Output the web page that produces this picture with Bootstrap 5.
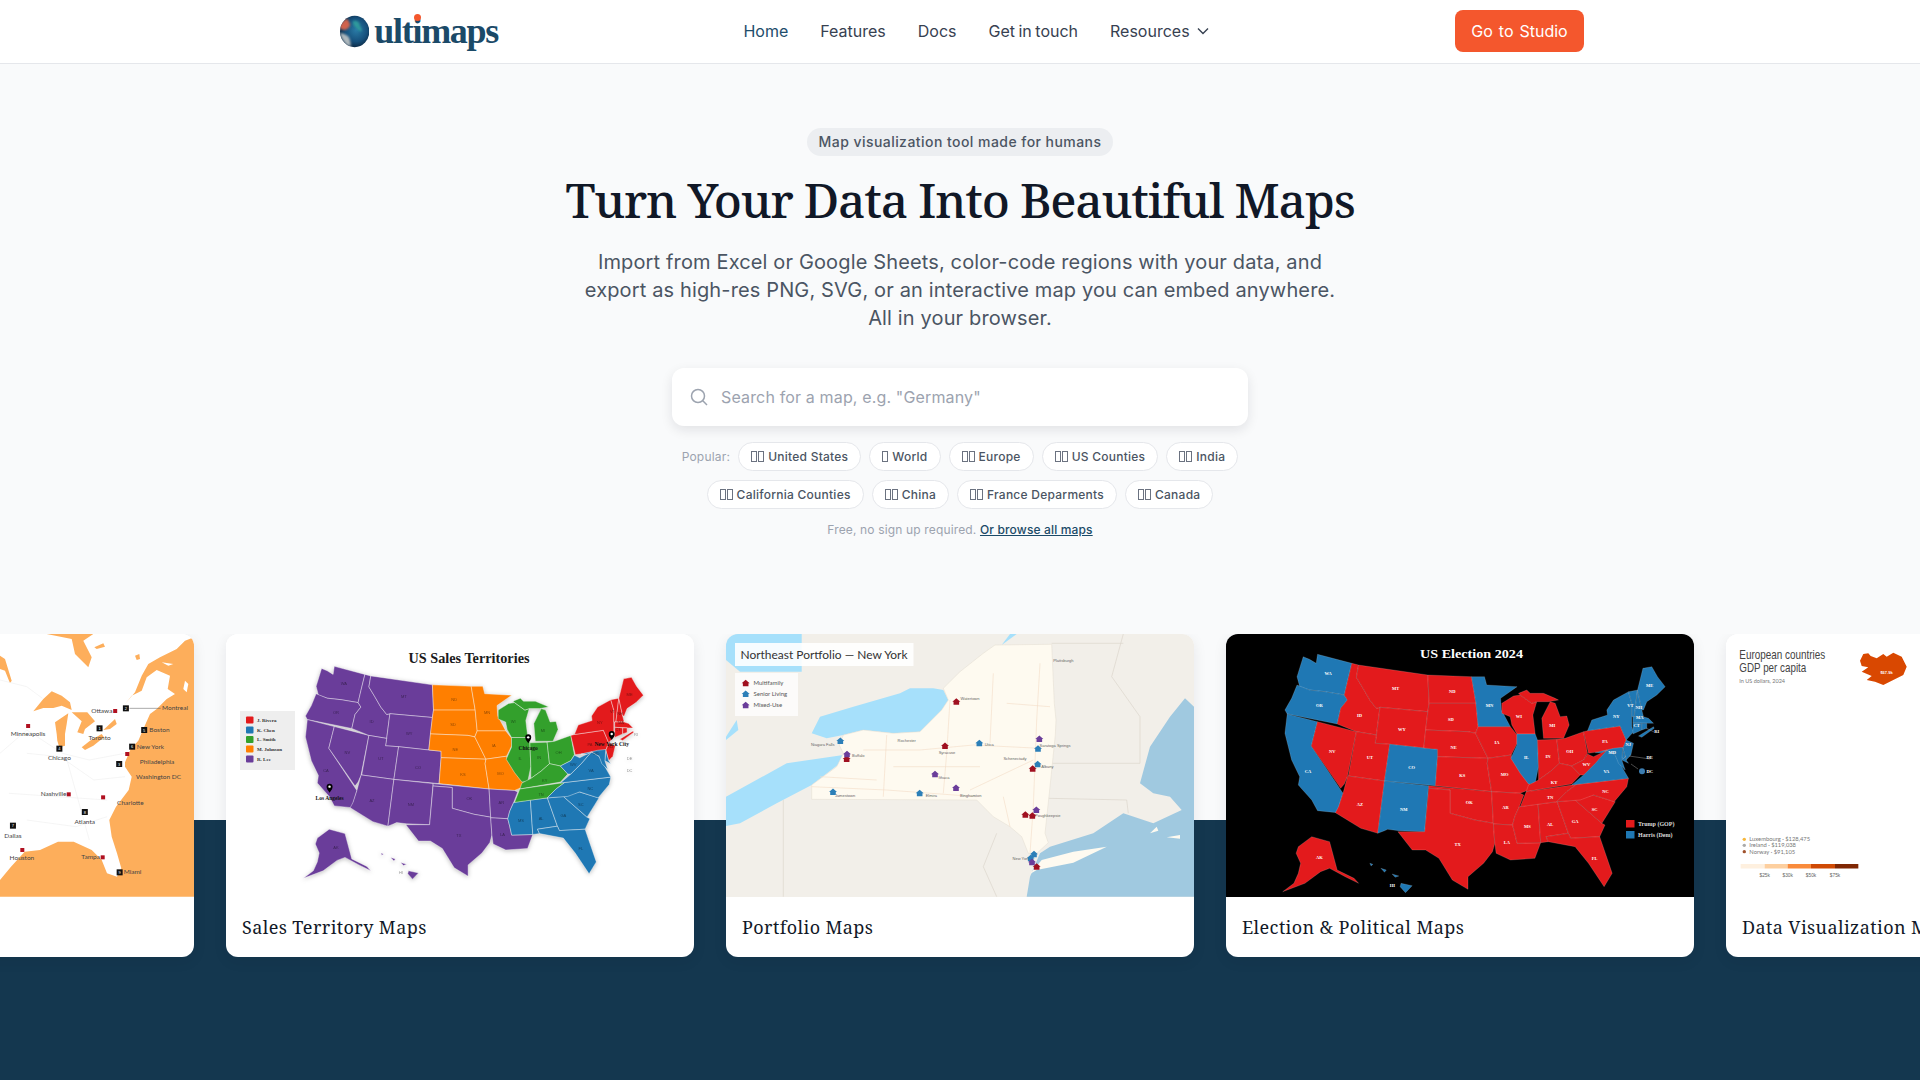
<!doctype html>
<html lang="en"><head><meta charset="utf-8"><title>ultimaps</title>
<link href="https://cdn.jsdelivr.net/npm/bootstrap@5.3.0/dist/css/bootstrap.min.css" rel="stylesheet">
<style>
body{background:#f9fafb;font-family:Inter,"Liberation Sans",sans-serif;color:#111827;overflow-x:hidden}
.site-nav{background:#fff;border-bottom:1px solid #e5e7eb;height:64px}
.nav-wrap{max-width:1280px;padding:0 16px;height:62px}
.brand-text{font-family:"Liberation Serif",serif;font-weight:700;font-size:36px;letter-spacing:-1.3px;color:#1b4a68;line-height:1}
.brand-wrap{width:162px;position:relative;gap:5px;padding-left:4px}
.brand-dot{position:absolute;left:78px;top:1px;width:7px;height:7px;border-radius:50%;background:#f4572d}
.top-link{color:#374151;font-size:16px;font-weight:400;text-decoration:none;word-spacing:-1px}
.top-link.active-link{color:#1e4d6b}
.link-row{gap:32px}
.caret-gap{gap:6px}
.studio-btn{background:#f4572d;color:#fff;border-radius:8px;height:42px;width:129px;font-size:16px;line-height:42px;padding:0;border:0;word-spacing:1.500px}
.hero-wrap{padding-top:64px;height:570px}
.tag-pill{background:#eceef1;color:#4b5563;font-size:14px;font-weight:500;border-radius:14px;height:28px;line-height:28px;padding:0 12px;letter-spacing:.45px;display:inline-block}
.hero-title{font-family:"Noto Serif","DejaVu Serif",serif;font-size:48px;font-weight:500;letter-spacing:-1.2px;line-height:58px;margin:15px 0 19px;color:#111827}
.hero-sub{font-size:20px;line-height:28px;color:#4b5563;width:768px;margin:0 auto 36px;letter-spacing:.14px}
.search-box{width:576px;height:58px;background:#fff;border-radius:12px;box-shadow:0 4px 12px rgba(17,24,39,.1);padding:0 18px;margin:0 auto 16px;gap:13px}
.search-input{border:0;outline:0;flex:1;background:none;font-size:16px;padding:0}
.search-input::placeholder{color:#9ca3af;letter-spacing:.15px}
.pill-area{width:576px;margin:0 auto;row-gap:9px;column-gap:8px}
.pop-label{font-size:12px;color:#9ca3af;line-height:29px;letter-spacing:.2px}
.map-pill{font-size:12px;font-weight:500;color:#4b5563;background:#fff;border:1px solid #e5e7eb;border-radius:15px;height:29px;padding:0 12px;gap:4px;letter-spacing:.25px;text-decoration:none}
.tofu-set{gap:1px}
.tofu-box{display:block;width:6px;height:11px;border:1px solid #6b7280}
.free-note{font-size:12px;color:#9ca3af;margin-top:12px;letter-spacing:.15px}
.free-note a{color:#1b4a68;font-weight:500}
.band{background:linear-gradient(#f9fafb 186px,#14374f 186px);padding-bottom:130px;overflow:hidden}
.card-row{gap:32px}
.map-card{flex:0 0 468px;height:323px;background:#fff;border-radius:12px;overflow:hidden;box-shadow:0 4px 14px rgba(17,24,39,.08)}
.map-pic{display:block;width:468px;height:263px}
.map-name{font-family:"Noto Serif","DejaVu Serif",serif;font-size:18px;font-weight:400;letter-spacing:.4px;padding:0 16px;height:60px;line-height:60px;color:#111827;white-space:nowrap}
</style></head><body>
<nav class="site-nav"><div class="nav-wrap mx-auto d-flex align-items-center justify-content-between">
<a class="brand-wrap d-flex align-items-center text-decoration-none">
<svg width="30" height="33" viewBox="2 0 30 33" aria-hidden="true"><defs><radialGradient id="gl" cx=".55" cy=".45" r=".62"><stop offset="0" stop-color="#2a7ba6"/><stop offset=".6" stop-color="#16507c"/><stop offset="1" stop-color="#0b2036"/></radialGradient><filter id="sf" x="-20%" y="-20%" width="140%" height="140%"><feGaussianBlur stdDeviation=".9"/></filter><clipPath id="gc"><ellipse cx="17" cy="16.500" rx="15" ry="16"/></clipPath></defs><ellipse cx="17" cy="16.500" rx="15" ry="16" fill="url(#gl)"/><g clip-path="url(#gc)" filter="url(#sf)"><path d="M2 10C5 5 8 3.500 10 4c1 3 3 4 2 7-1 2-2 3-5 4-2 0-3-1-5-1.500z" fill="#d0644e"/><path d="M2 18c2 0 5 1 8 3 2 2 3 6 3 11C8 31 3.500 25 2 18z" fill="#aeb8bd"/><path d="M15 6c3-1 6 0 7 3 0 3 3 4 2 7-2 1-3-1-5-3-2-1-4-4-4-7z" fill="#2f9a9c"/></g></svg>
<span class="brand-text">ultimaps</span><span class="brand-dot"></span></a>
<div class="link-row d-flex align-items-center"><a class="top-link active-link">Home</a><a class="top-link">Features</a><a class="top-link">Docs</a><a class="top-link">Get in touch</a><a class="top-link d-flex align-items-center caret-gap">Resources<svg width="14" height="14" viewBox="0 0 14 14" fill="none" stroke="#374151" stroke-width="1.400" aria-hidden="true"><path d="M2 4.500l5 5 5-5"/></svg></a></div>
<button class="studio-btn">Go to Studio</button></div></nav>
<section class="hero-wrap text-center"><span class="tag-pill">Map visualization tool made for humans</span>
<h1 class="hero-title">Turn Your Data Into Beautiful Maps</h1>
<p class="hero-sub">Import from Excel or Google Sheets, color-code regions with your data, and export as high-res PNG, SVG, or an interactive map you can embed anywhere. All in your browser.</p>
<div class="search-box d-flex align-items-center"><svg width="18" height="18" viewBox="0 0 18 18" fill="none" stroke="#9ca3af" stroke-width="1.500" aria-hidden="true"><circle cx="8" cy="8" r="6.500"/><path d="M12.800 12.800L17 17"/></svg><input class="search-input" placeholder='Search for a map, e.g. "Germany"'></div>
<div class="pill-area d-flex flex-wrap justify-content-center"><span class="pop-label">Popular:</span>
<a class="map-pill d-flex align-items-center"><span class="tofu-set d-flex"><i class="tofu-box"></i><i class="tofu-box"></i></span>United States</a>
<a class="map-pill d-flex align-items-center"><span class="tofu-set d-flex"><i class="tofu-box"></i></span>World</a>
<a class="map-pill d-flex align-items-center"><span class="tofu-set d-flex"><i class="tofu-box"></i><i class="tofu-box"></i></span>Europe</a>
<a class="map-pill d-flex align-items-center"><span class="tofu-set d-flex"><i class="tofu-box"></i><i class="tofu-box"></i></span>US Counties</a>
<a class="map-pill d-flex align-items-center"><span class="tofu-set d-flex"><i class="tofu-box"></i><i class="tofu-box"></i></span>India</a>
<a class="map-pill d-flex align-items-center"><span class="tofu-set d-flex"><i class="tofu-box"></i><i class="tofu-box"></i></span>California Counties</a>
<a class="map-pill d-flex align-items-center"><span class="tofu-set d-flex"><i class="tofu-box"></i><i class="tofu-box"></i></span>China</a>
<a class="map-pill d-flex align-items-center"><span class="tofu-set d-flex"><i class="tofu-box"></i><i class="tofu-box"></i></span>France Deparments</a>
<a class="map-pill d-flex align-items-center"><span class="tofu-set d-flex"><i class="tofu-box"></i><i class="tofu-box"></i></span>Canada</a></div>
<p class="free-note">Free, no sign up required. <a href="#">Or browse all maps</a></p></section>
<section class="band"><div class="card-row d-flex justify-content-center">
<div class="map-card"><svg class="map-pic" id="m-city" viewBox="0 0 468 263"></svg><div class="map-name"></div></div>
<div class="map-card"><svg class="map-pic" id="m-sales" viewBox="0 0 468 263"></svg><div class="map-name">Sales Territory Maps</div></div>
<div class="map-card"><svg class="map-pic" id="m-port" viewBox="0 0 468 263"></svg><div class="map-name">Portfolio Maps</div></div>
<div class="map-card"><svg class="map-pic" id="m-elec" viewBox="0 0 468 263"></svg><div class="map-name">Election &amp; Political Maps</div></div>
<div class="map-card"><svg class="map-pic" id="m-data" viewBox="0 0 468 263"></svg><div class="map-name">Data Visualization Maps</div></div>
</div></section>
<script src="https://cdn.jsdelivr.net/npm/bootstrap@5.3.0/dist/js/bootstrap.bundle.min.js"></script>
<script>
var US={WA:"186,110 200,118 215,130 218,103 295,130 285,185 278,225 235,215 200,210 178,200 172,170",
OR:"172,195 200,210 235,215 278,225 285,240 270,265 262,312 150,282 145,270 160,235",
CA:"150,282 218,305 204,378 275,520 262,578 218,572 205,540 175,495 178,470 160,420 145,340",
NV:"218,305 305,335 285,470 278,492 270,505 204,378",
ID:"295,130 310,135 305,172 320,205 335,240 350,265 358,262 350,345 305,335 262,312 270,265 285,240 278,225 285,185",
MT:"310,135 465,165 468,250 465,275 358,262 350,265 335,240 320,205 305,172",
WY:"358,262 465,275 456,384 380,373 347,370 350,345",
UT:"305,335 350,345 347,370 380,373 368,483 287,468",
CO:"380,373 456,384 487,388 487,410 482,497 368,483",
AZ:"287,468 368,483 353,640 315,625 258,578 265,560 275,520 285,470",
NM:"368,483 467,497 458,635 400,632 375,628 368,632 353,640",
ND:"465,165 563,170 573,250 468,250",
SD:"468,250 573,250 578,320 572,340 555,335 460,330 465,275",
NE:"460,330 555,335 572,340 585,375 600,415 487,410 487,388 456,384",
KS:"487,410 600,415 598,430 608,515 482,497",
OK:"467,497 608,515 612,610 570,600 515,580 515,510 467,505",
TX:"467,505 515,510 515,580 570,600 612,610 615,670 610,695 590,730 555,770 555,808 520,780 490,715 460,690 430,690 398,635 458,635",
MN:"563,170 592,170 597,195 665,200 628,235 630,270 650,320 578,320 573,250",
IA:"578,320 650,320 665,345 665,370 652,405 600,415 585,375 572,340",
MO:"600,415 652,405 655,420 695,495 690,510 672,520 608,515 598,430",
AR:"608,515 672,520 680,525 670,560 660,590 655,615 612,612",
LA:"612,612 655,615 660,640 665,670 718,668 705,715 650,720 618,700 615,670",
MS:"670,560 712,552 718,668 665,670 660,640 655,615 660,590",
AL:"712,552 755,545 780,640 730,650 735,665 718,668",
GA:"755,545 795,540 855,610 862,615 850,650 785,655 780,640",
FL:"730,650 780,640 785,655 850,650 878,760 860,800 825,730 795,680 735,665",
SC:"795,540 835,525 885,545 855,610",
AK:"175,680 205,650 245,665 262,750 300,775 310,790 280,770 245,745 225,755 190,790 140,815 165,790 175,760 180,730 170,700",
H1:"405,790 430,797 415,818 403,800",H2:"385,762 400,768 392,772",H3:"360,745 372,750 368,757",H4:"335,730 342,733 338,738"};
var FINE={WI:"5,130 40,108 60,105 95,130 110,125 98,165 105,222 50,222 35,195 30,170 5,160",
UP:"55,100 80,90 90,100 130,100 165,115 175,120 145,125 110,125 95,130 60,105",
MI:"130,235 125,175 150,125 165,130 180,170 200,168 207,195 190,235",
IL:"50,222 105,222 112,240 115,320 105,370 85,372 60,340 32,295 50,255",
IN:"112,240 170,238 178,310 150,335 115,360 115,320",
OH:"170,238 195,235 250,215 262,280 250,300 215,318 178,310",
KY:"85,375 115,360 150,335 178,310 215,318 240,345 215,372 78,395",
TN:"78,395 230,373 200,395 170,425 60,440",
NC:"230,373 385,355 380,380 342,425 280,405 240,420 170,425 200,395",
VA:"215,375 250,345 285,310 320,270 345,285 365,320 385,355",
WV:"215,318 250,300 262,282 280,290 305,278 320,270 285,310 250,345 240,345",
PA:"250,215 262,212 360,198 378,240 368,265 265,280",
NY:"275,180 322,165 320,150 340,120 385,95 395,130 395,200 400,215 378,240 360,198 262,212",
VT:"385,95 412,90 402,170 395,170 395,130",
NH:"412,90 425,150 430,170 402,170",
ME:"412,90 428,25 455,20 472,50 495,80 470,105 440,125 430,150 425,150",
MA:"398,170 430,170 445,175 460,190 445,190 398,188",
CT:"398,188 425,190 425,210 398,222",
RI:"425,190 440,190 440,205 425,210",
NJ:"378,240 400,250 392,285 378,300 368,265",
DE:"368,265 378,300 385,310 365,300",
MD:"285,278 340,265 368,262 365,300 375,330 355,310 345,285 320,270 305,278",
LI:"415,228 460,200 462,205 425,232"};
for(var fk in FINE){US[fk]=FINE[fk].split(' ').map(function(p){var q=p.split(',');return((280+q[0]/3)*2.24).toFixed(1)+','+(120+ +q[1])}).join(' ')}
var LB={WA:[242,160],OR:[222,257],CA:[197,453],NV:[251,393],ID:[312,287],MT:[393,205],WY:[407,328],UT:[335,412],CO:[429,443],AZ:[313,553],NM:[411,567],ND:[520,215],SD:[517,298],NE:[523,382],KS:[542,467],OK:[558,546],TX:[532,672],MN:[603,257],IA:[620,368],MO:[637,464],AR:[639,561],LA:[642,668],MS:[688,620],AL:[739,614],GA:[795,605],FL:[839,714],SC:[839,568],NC:[863,513],TN:[739,533],KY:[748,486],VA:[865,453],WV:[820,433],OH:[783,394],IN:[734,410],IL:[686,413],WI:[669,288],MI:[744,317],PA:[862,365],NY:[887,290],VT:[919,255],NH:[938,262],ME:[962,197],MA:[940,293],CT:[933,316],NJ:[914,372],MD:[878,396],AK:[222,713],HI:[386,795],RI:[978,333],DE:[962,413],DC:[962,454]};
function poly(s,f,a){return '<polygon points="'+s.split(' ').map(function(p){var c=p.split(',');var r=f(+c[0],+c[1]);return r[0].toFixed(1)+','+r[1].toFixed(1)}).join(' ')+'" '+a+'/>'}
function line(s,f,a){return poly(s,f,a).replace('<polygon','<polyline')}
function txt(x,y,t,a){return '<text x="'+x.toFixed(1)+'" y="'+y.toFixed(1)+'" '+a+'>'+t+'</text>'}
function usMap(f,col,stroke,lab){var h='';for(var k in US){h+=poly(US[k],f,'fill="'+col(k)+'" stroke="'+stroke+'" stroke-width=".6"')}
for(var l in LB){var p=f(LB[l][0],LB[l][1]);h+=txt(p[0],p[1]+1.5,l,lab)}return h}
/* election */
var fE=function(x,y){return[(x-13)/2.24,(y-42)/3]};
var BLUE='WA OR CA CO NM MN IL VA MD DE NJ NY LI CT RI MA VT NH ME H1 H2 H3 H4'.split(' ');
var e='<rect width="468" height="263" fill="#000"/>'+usMap(fE,function(k){return BLUE.indexOf(k)>=0?'#1f78b4':'#e31a1c'},'rgba(255,255,255,.25)','fill="#fff" font-family="Liberation Serif,serif" font-weight="700" font-size="4.500" text-anchor="middle"');
e+='<circle cx="416" cy="137.300" r="3" fill="#3c7db0"/><path d="M403 122l21 3M420 94l8 4M400 122l-3 3M405 130l7 5" stroke="#bbb" stroke-width=".4" fill="none"/>';
e+=txt(245.500,24,'US Election 2024','fill="#fff" font-family="Liberation Serif,serif" font-weight="700" font-size="13" text-anchor="middle" textLength="103" lengthAdjust="spacingAndGlyphs"');
e+='<rect x="400" y="186" width="8.500" height="7.500" fill="#e31a1c"/><rect x="400" y="197" width="8.500" height="7.500" fill="#1f78b4"/>';
e+=txt(412,192,'Trump (GOP)','fill="#ddd" font-family="Liberation Serif,serif" font-weight="700" font-size="6"')+txt(412,203,'Harris (Dem)','fill="#ddd" font-family="Liberation Serif,serif" font-weight="700" font-size="6"');
document.getElementById('m-elec').innerHTML=e;
/* sales */
var fS=function(x,y){return[(.889*(x-13)+60.4)/2.24,(.893*y+47-42)/3]};
var G={P:'WA OR CA NV ID MT WY UT CO AZ NM TX OK AR LA AK H1 H2 H3 H4',O:'ND SD NE KS MN IA MO',V:'WI IL IN MI UP OH KY TN',R:'ME NH VT MA CT RI NY LI NJ PA',B:'WV VA NC SC GA FL AL MS MD DE'};
var CS={P:'#6a3d9a',O:'#ff7f00',V:'#33a02c',R:'#e31a1c',B:'#1f78b4'};
function sc(k){for(var g in G){if(G[g].split(' ').indexOf(k)>=0)return CS[g]}return '#888'}
var s='<rect width="468" height="263" fill="#fff"/><g style="filter:drop-shadow(0 1px 2px rgba(0,0,0,.25))">'+usMap(fS,sc,'rgba(255,255,255,.65)','fill="rgba(0,0,0,.45)" font-family="Liberation Sans,sans-serif" font-size="4" text-anchor="middle"')+'</g>';
s+=txt(243,28.500,'US Sales Territories','fill="#1b1b1b" font-family="Liberation Serif,serif" font-weight="700" font-size="14" text-anchor="middle" textLength="121" lengthAdjust="spacingAndGlyphs"');
s+='<rect x="14" y="77" width="55" height="59" fill="#eee"/>';
[['#e31a1c','J. Rivera',86],['#1f78b4','K. Chen',96],['#33a02c','L. Smith',105.500],['#ff7f00','M. Johnson',115],['#6a3d9a','R. Lee',125]].forEach(function(r){s+='<rect x="20" y="'+(r[2]-3.5)+'" width="7.500" height="7" rx="1" fill="'+r[0]+'"/>'+txt(31,r[2]+1.8,r[1],'fill="#333" font-family="Liberation Serif,serif" font-weight="700" font-size="5"')});
[[1183,352,'Chicago',385],[738,500,'Los Angeles',533],[1370,342,'New York City',373]].forEach(function(r){var x=(r[0]-506)/2.24,y=(r[1]-42)/3;s+='<path d="M'+x+' '+(y+6)+'c-2-3-3-4-3-6a3 3 0 0 1 6 0c0 2-1 3-3 6z" fill="#000"/><circle cx="'+x+'" cy="'+y+'" r="1.200" fill="#fff"/>'+txt(x,(r[3]-42)/3+2,r[2],'fill="#111" font-family="Liberation Serif,serif" font-size="5.500" font-weight="700" text-anchor="middle"')});
document.getElementById('m-sales').innerHTML=s;
/* city */
var fC=function(x,y){return[274+x/2.24,(y-42)/3]},fT=function(x,y){return[274+x/3,y/3]},O='fill="#fdae5b"',W='fill="#fff"';
var c='<rect width="468" height="263" fill="#fff"/>';
['582,10 582,788 0,788 0,738 33,698 74,653 120,648 174,623 221,623 275,648 305,678 321,718 351,728 364,703 351,658 335,608 328,558 348,518 386,468 395,428 375,398 375,385 392,345 415,320 430,285 450,240 470,225 500,195 525,180 503,165 510,125 470,108 440,130 425,170 395,185 375,210 405,175 425,125 445,90 480,70 530,45 555,20',
'140,0 215,15 225,60 265,100 275,70 250,20 280,0','283,40 310,28 315,38 290,45','405,65 418,60 420,75 410,78','0,65 15,75 35,140 30,148 15,110 0,105','100,232 130,195 155,172 185,185 210,205 215,228 185,215 160,222 130,222','170,300 165,265 205,238 200,270 195,300 195,335 178,340 172,320','215,235 262,235 285,262 255,285 250,300 232,295 245,262','310,288 345,255 350,270 330,285','245,340 270,320 305,300 312,310 280,335 255,348','-400,0 -300,60 -200,0'].forEach(function(p){c+=poly(p,fT,O)});
['485,85 520,90 505,95','555,140 565,150 560,175 550,165','360,385 372,395 385,430 375,425'].forEach(function(p){c+=poly(p,fT,W)});
['0,180 60,200 95,235','0,400 60,330 140,400 200,420 280,400','60,400 135,410 210,480 280,470','20,520 130,530 240,540','150,420 200,660','60,600 170,620 240,590'].forEach(function(l){c+=line(l,fC,'fill="none" stroke="#f0f0f0" stroke-width=".7"')});
var pc=fC(290,265),pd=fC(360,265);c+='<line x1="'+pc[0]+'" y1="'+pc[1]+'" x2="'+pd[0]+'" y2="'+pd[1]+'" stroke="#555" stroke-width=".5"/>';
[['Ottawa',228,273],['Montreal',392,265],['Minneapolis',63,343],['Toronto',223,355],['Boston',357,330],['New York',337,380],['Philadelphia',352,426],['Washington DC',355,471],['Chicago',133,415],['Nashville',120,523],['Charlotte',292,550],['Atlanta',190,605],['Dallas',29,647],['Houston',49,715],['Tampa',203,712],['Miami',297,757]].forEach(function(r){var p=fC(r[1],r[2]);c+=txt(p[0],p[1]+2,r[0],'fill="#444" font-family="Lato,sans-serif" font-size="6.500" text-anchor="middle"')});
[[258,273],[63,318],[285,402],[154,523],[231,532],[50,690],[230,712]].forEach(function(r){var p=fC(r[0],r[1]);c+='<rect x="'+(p[0]-2)+'" y="'+(p[1]-2)+'" width="4" height="4" fill="#b01020"/>'});
[[282,265,2],[223,325,1],[323,330,5],[296,380,6],[267,432,3],[133,386,4],[190,576,8],[29,617,7],[268,757,9]].forEach(function(r){var p=fC(r[0],r[1]);c+='<rect x="'+(p[0]-3)+'" y="'+(p[1]-3)+'" width="6" height="6" fill="#111"/>'+txt(p[0],p[1]+1.5,r[2],'fill="#fff" font-family="Liberation Sans,sans-serif" font-size="4" text-anchor="middle"')});
document.getElementById('m-city').innerHTML=c;
/* portfolio */
var fP=function(x,y){return[(x-18)/3,(y-42)/3]};
var n='<rect width="468" height="263" fill="#f2efe9"/>';
['275,340 300,290 400,260 540,220 570,205 640,205 670,210 685,240 665,270 600,335 520,340 430,330 370,345 320,355','18,530 200,430 370,405 360,430 275,495 170,550 60,610 18,618','18,350 50,300 55,330 18,360','18,42 100,42 245,42 245,155 60,155 18,120','845,75 890,42 870,42'].forEach(function(p){n+=poly(p,fP,'fill="#a6e0fb"')});
n+=poly('1422,260 1395,235 1350,290 1290,380 1260,490 1300,520 1350,530 1385,570 1300,610 1210,580 1120,640 990,680 960,700 930,770 920,830 1422,830',fP,'fill="#a0c9e0"');
['190,540 190,830','1210,42 1175,170 1260,290 1260,430','990,430 1260,430','985,535 1220,540 1225,580','830,640 790,740 830,830','995,70 1210,70'].forEach(function(l){n+=line(l,fP,'fill="none" stroke="#d8d2c8" stroke-width=".6"')});
n+=poly('275,538 275,495 350,440 370,400 358,375 370,345 430,330 520,340 600,335 665,270 685,240 670,205 720,155 790,100 825,75 995,73 1003,250 1008,300 1006,345 990,500 975,640 985,668 945,705 925,700 905,650 870,620 820,590 770,540',fP,'fill="#fefaf0" stroke="#e3ddd0" stroke-width=".5"');
n+=poly('930,762 965,720 1060,695 1160,680 1060,728 950,750',fP,'fill="#fefaf0"');
n+=poly('1290,640 1310,620 1315,632',fP,'fill="#fefaf0"')+poly('1340,652 1380,645 1380,656',fP,'fill="#fefaf0"');
['275,500 500,510 770,530','430,390 600,390 760,375 960,385','690,240 680,400 670,520','960,130 950,300 940,560 930,700','500,345 490,530','820,160 810,370','750,510 940,420','520,440 780,440','300,470 470,480','860,250 990,260','850,530 870,620'].forEach(function(l){n+=line(l,fP,'fill="none" stroke="#f3dcc6" stroke-width=".6"')});
n+='<rect x="9" y="9" width="178.500" height="23" fill="#fff" fill-opacity=".9"/><rect x="9" y="39" width="63" height="43" fill="#fff" fill-opacity=".75"/>';
n+=txt(14.500,25,'Northeast Portfolio — New York','fill="#333" font-family="Lato,sans-serif" font-size="12" textLength="167" lengthAdjust="spacingAndGlyphs"');
[['Multifamily',188],['Senior Living',221],['Mixed-Use',254]].forEach(function(r){n+=txt(27.500,(r[1]-42)/3+2,r[0],'fill="#555" font-family="Lato,sans-serif" font-size="6"')});
[['Plattsburgh',1030,122],['Watertown',750,236],['Rochester',560,361],['Syracuse',681,397],['Utica',808,373],['Saratoga Springs',1005,375],['Schenectady',885,415],['Albany',982,440],['Buffalo',415,406],['Niagara Falls',308,373],['Ithaca',672,473],['Jamestown',375,525],['Elmira',634,527],['Binghamton',752,525],['Poughkeepsie',983,587],['New York',903,714]].forEach(function(r){var p=fP(r[1],r[2]);n+=txt(p[0],p[1]+1.5,r[0],'fill="#666" font-family="Liberation Sans,sans-serif" font-size="4" text-anchor="middle"')});
function house(z,col){var p=fP(z[0],z[1]);return '<path d="M'+(p[0]-4)+' '+p[1]+'l4-3.500 4 3.500h-1.200v3h-5.600v-3z" fill="'+col+'"/>'}
[[77,190],[709,245],[675,378],[380,417],[938,446],[916,584],[937,587],[950,740]].forEach(function(z){n+=house(z,'#a01020')});
[[77,222],[361,363],[778,370],[954,386],[953,433],[339,516],[599,520],[942,703],[932,715]].forEach(function(z){n+=house(z,'#2c7fb8')});
[[77,256],[958,357],[381,403],[645,463],[708,504],[949,570],[936,727]].forEach(function(z){n+=house(z,'#6a3d9a')});
document.getElementById('m-port').innerHTML=n;
/* data */
var fD=function(x,y){return[(x-18)/3,(y-12)/3]};
var d='<rect width="468" height="263" fill="#fff"/>';
d+=txt(13.300,25,'European countries','fill="#444" font-family="Liberation Sans,sans-serif" font-size="13" textLength="86" lengthAdjust="spacingAndGlyphs"');
d+=txt(13.300,38,'GDP per capita','fill="#444" font-family="Liberation Sans,sans-serif" font-size="13" textLength="67" lengthAdjust="spacingAndGlyphs"');
d+=txt(13.300,49,'In US dollars, 2024','fill="#777" font-family="Lato,sans-serif" font-size="5.500"');
d+=poly('420,92 430,72 445,70 452,78 470,85 490,72 500,80 520,68 545,80 560,110 550,135 520,150 490,165 465,155 440,150 455,138 425,125 445,112 425,108',fD,'fill="#d94801"');
d+=txt(160.500,40,'$67.9k','fill="#fff" font-family="Liberation Sans,sans-serif" font-weight="700" font-size="4" text-anchor="middle"');
[['Luxembourg · $128,475',628,'#f6b73c'],['Ireland · $119,038',646,'#aaa'],['Norway · $91,105',665,'#a0522d']].forEach(function(r){var y=(r[1]-12)/3;d+='<circle cx="18.300" cy="'+y+'" r="1.700" fill="'+r[2]+'"/>'+txt(23.300,y+2,r[0],'fill="#777" font-family="Lato,sans-serif" font-size="5.800"')});
[[62,134,'#fef0df'],[134,203,'#fdcf9f'],[203,273,'#f98b3c'],[273,345,'#cf4a05'],[345,415,'#7f2704']].forEach(function(r){d+='<rect x="'+(r[0]-18)/3+'" y="230" width="'+(r[1]-r[0])/3+'" height="4.500" fill="'+r[2]+'"/>'});
[[134,'$25k'],[203,'$30k'],[273,'$50k'],[345,'$75k']].forEach(function(r){d+=txt((r[0]-18)/3,243,r[1],'fill="#666" font-family="Liberation Sans,sans-serif" font-size="4.800" text-anchor="middle"')});
document.getElementById('m-data').innerHTML=d;
</script>
</body></html>
